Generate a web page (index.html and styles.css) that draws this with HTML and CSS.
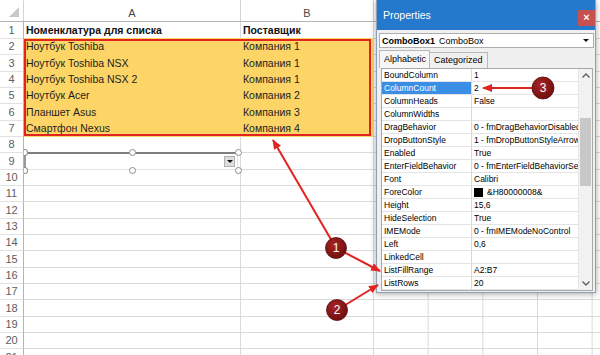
FILE: index.html
```html
<!DOCTYPE html>
<html>
<head>
<meta charset="utf-8">
<link rel="stylesheet" href="styles.css">
</head>
<body>
<div class="screen">
  <div class="sheet">
    <div class="colhdr">
      <div class="corner"><span class="tri"></span></div>
      <div class="ch">A</div>
      <div class="ch">B</div>
      <div class="ch rest"></div>
    </div>
    <div class="row"><div class="rh">1</div><div class="c bold">Номенклатура для списка</div><div class="c bold">Поставщик</div><div class="c rest"></div></div>
    <div class="row"><div class="rh">2</div><div class="c hl">Ноутбук Toshiba</div><div class="c hl">Компания 1</div><div class="c rest"></div></div>
    <div class="row"><div class="rh">3</div><div class="c hl">Ноутбук Toshiba NSX</div><div class="c hl">Компания 1</div><div class="c rest"></div></div>
    <div class="row"><div class="rh">4</div><div class="c hl">Ноутбук Toshiba NSX 2</div><div class="c hl">Компания 1</div><div class="c rest"></div></div>
    <div class="row"><div class="rh">5</div><div class="c hl">Ноутбук Acer</div><div class="c hl">Компания 2</div><div class="c rest"></div></div>
    <div class="row"><div class="rh">6</div><div class="c hl">Планшет Asus</div><div class="c hl">Компания 3</div><div class="c rest"></div></div>
    <div class="row"><div class="rh">7</div><div class="c hl">Смартфон Nexus</div><div class="c hl">Компания 4</div><div class="c rest"></div></div>
    <div class="row"><div class="rh">8</div><div class="c"></div><div class="c"></div><div class="c rest"></div></div>
    <div class="row"><div class="rh">9</div><div class="c"></div><div class="c"></div><div class="c rest"></div></div>
    <div class="row"><div class="rh">10</div><div class="c"></div><div class="c"></div><div class="c rest"></div></div>
    <div class="row"><div class="rh">11</div><div class="c"></div><div class="c"></div><div class="c rest"></div></div>
    <div class="row"><div class="rh">12</div><div class="c"></div><div class="c"></div><div class="c rest"></div></div>
    <div class="row"><div class="rh">13</div><div class="c"></div><div class="c"></div><div class="c rest"></div></div>
    <div class="row"><div class="rh">14</div><div class="c"></div><div class="c"></div><div class="c rest"></div></div>
    <div class="row"><div class="rh">15</div><div class="c"></div><div class="c"></div><div class="c rest"></div></div>
    <div class="row"><div class="rh">16</div><div class="c"></div><div class="c"></div><div class="c rest"></div></div>
    <div class="row"><div class="rh">17</div><div class="c"></div><div class="c"></div><div class="c rest"></div></div>
    <div class="row"><div class="rh">18</div><div class="c"></div><div class="c"></div><div class="c rest"></div></div>
    <div class="row"><div class="rh">19</div><div class="c"></div><div class="c"></div><div class="c rest"></div></div>
    <div class="row"><div class="rh">20</div><div class="c"></div><div class="c"></div><div class="c rest"></div></div>
    <div class="row"><div class="rh">21</div><div class="c"></div><div class="c"></div><div class="c rest"></div></div>

    <div class="selbox"></div>

    <div class="xcombo"><span class="xbtn"><span class="xarrow"></span></span></div>
    <span class="hd l t1"></span><span class="hd m t1"></span><span class="hd r t1"></span>
    <span class="hd l t2"></span><span class="hd m t2"></span><span class="hd r t2"></span>
  </div>

  <div class="props">
    <div class="ptitle"><span class="ptext">Properties</span><span class="pclose">×</span></div>
    <div class="pobj"><b>ComboBox1</b><span class="ptype">ComboBox</span><span class="pdrop"></span></div>
    <div class="ptabs"><span class="tab on">Alphabetic</span><span class="tab">Categorized</span></div>
    <div class="plist">
      <div class="prows">
        <div class="prow"><span class="pn">BoundColumn</span><span class="pv">1</span></div>
        <div class="prow sel"><span class="pn">ColumnCount</span><span class="pv">2</span></div>
        <div class="prow"><span class="pn">ColumnHeads</span><span class="pv">False</span></div>
        <div class="prow"><span class="pn">ColumnWidths</span><span class="pv"></span></div>
        <div class="prow"><span class="pn">DragBehavior</span><span class="pv">0 - fmDragBehaviorDisabled</span></div>
        <div class="prow"><span class="pn">DropButtonStyle</span><span class="pv">1 - fmDropButtonStyleArrow</span></div>
        <div class="prow"><span class="pn">Enabled</span><span class="pv">True</span></div>
        <div class="prow"><span class="pn">EnterFieldBehavior</span><span class="pv">0 - fmEnterFieldBehaviorSelectAll</span></div>
        <div class="prow"><span class="pn">Font</span><span class="pv">Calibri</span></div>
        <div class="prow"><span class="pn">ForeColor</span><span class="pv"><span class="swatch"></span>&amp;H80000008&amp;</span></div>
        <div class="prow"><span class="pn">Height</span><span class="pv">15,6</span></div>
        <div class="prow"><span class="pn">HideSelection</span><span class="pv">True</span></div>
        <div class="prow"><span class="pn">IMEMode</span><span class="pv">0 - fmIMEModeNoControl</span></div>
        <div class="prow"><span class="pn">Left</span><span class="pv">0,6</span></div>
        <div class="prow"><span class="pn">LinkedCell</span><span class="pv"></span></div>
        <div class="prow"><span class="pn">ListFillRange</span><span class="pv">A2:B7</span></div>
        <div class="prow"><span class="pn">ListRows</span><span class="pv">20</span></div>
      </div>
      <div class="pscroll">
        <svg class="chev" width="14" height="14" viewBox="0 0 14 14"><polyline points="3.5,8.5 7,5 10.5,8.5" fill="none" stroke="#606060" stroke-width="1.4"/></svg>
        <span class="thumb"></span>
        <svg class="chev" width="14" height="14" viewBox="0 0 14 14"><polyline points="3.5,5.5 7,9 10.5,5.5" fill="none" stroke="#606060" stroke-width="1.4"/></svg>
      </div>
    </div>
  </div>

  <svg class="annot" width="600" height="355" viewBox="0 0 600 355">
    <defs>
      <marker id="ah" markerWidth="10" markerHeight="8" refX="9" refY="4" orient="auto" markerUnits="userSpaceOnUse">
        <path d="M0,0 L10,4 L0,8 Z" fill="#e2231f"/>
      </marker>
      <radialGradient id="bg" cx="40%" cy="35%" r="70%">
        <stop offset="0" stop-color="#a82424"/>
        <stop offset="1" stop-color="#6b0e0e"/>
      </radialGradient>
    </defs>
    <g stroke="#e2231f" stroke-width="2" fill="none" marker-end="url(#ah)">
      <line x1="336" y1="248" x2="273" y2="140"/>
      <line x1="336" y1="248" x2="380" y2="271"/>
      <line x1="337" y1="310" x2="378" y2="285"/>
      <line x1="543" y1="88" x2="483" y2="88"/>
    </g>
    <g class="badge">
      <circle cx="336" cy="248" r="10.5" fill="url(#bg)" stroke="#5a0b0b" stroke-width="0.8"/>
      <text x="336" y="252">1</text>
      <circle cx="337" cy="310" r="10.5" fill="url(#bg)" stroke="#5a0b0b" stroke-width="0.8"/>
      <text x="337" y="314">2</text>
      <circle cx="543" cy="88" r="11" fill="url(#bg)" stroke="#5a0b0b" stroke-width="0.8"/>
      <text x="543" y="92">3</text>
    </g>
  </svg>
</div>
</body>
</html>
```

FILE: styles.css
```css
* { box-sizing: border-box; }
html, body { margin: 0; padding: 0; }
body {
  width: 600px;
  height: 355px;
  overflow: hidden;
  background: #fff;
  font-family: "Liberation Sans", Arial, sans-serif;
}
.screen {
  position: relative;
  width: 600px;
  height: 355px;
  overflow: hidden;
}

/* ---------- spreadsheet ---------- */
.sheet {
  font-size: 10.5px;
  color: #1d1d1d;
}
.colhdr, .row {
  display: grid;
  grid-template-columns: 24px 217px 133px 1fr;
}
.colhdr {
  height: 22px;
  border-bottom: 1px solid #b4b4b4;
  background: #fff;
}
.corner {
  display: flex;
  justify-content: flex-end;
  align-items: flex-end;
  padding: 0 4px 4px 0;
  border-right: 1px solid #d4d4d4;
}
.tri {
  width: 0;
  height: 0;
  border-left: 10px solid transparent;
  border-bottom: 10px solid #c8c8c8;
}
.ch {
  display: flex;
  justify-content: center;
  align-items: flex-end;
  padding-bottom: 2px;
  font-size: 11px;
  color: #444;
  border-right: 1px solid #d4d4d4;
}
.row { height: 16.33px; }
.rh {
  border-right: 1px solid #b4b4b4;
  border-bottom: 1px solid #e1e1e1;
  color: #5e5e5e;
  font-size: 11px;
  text-align: center;
  line-height: 16px;
}
.c {
  border-right: 1px solid #dadada;
  border-bottom: 1px solid #dadada;
  padding-left: 2px;
  line-height: 16px;
  white-space: nowrap;
  overflow: hidden;
}
.bold { font-weight: bold; color: #111; }
.hl {
  background: #fdd567;
  border-color: #fdd567;
}
.rest {
  border-right: none;
  background: linear-gradient(to left, #dadada 1px, transparent 1px) 0 0 / 54.67px 100% repeat-x;
}
.selbox {
  position: absolute;
  left: 24px;
  top: 39px;
  width: 347px;
  height: 97px;
  border: 2px solid #e2231f;
}
.xcombo {
  position: absolute;
  left: 24px;
  top: 152px;
  width: 214px;
  height: 18px;
  background: #fff;
  border-top: 2px solid #7f7f7f;
  border-left: 2px solid #9a9a9a;
  border-right: 1px solid #e3e3e3;
  border-bottom: 1px solid #e3e3e3;
  display: flex;
  justify-content: flex-end;
  align-items: center;
  padding-right: 2px;
}
.xbtn {
  width: 11px;
  height: 11px;
  background: #dedede;
  border: 1px solid #b0b0b0;
  display: flex;
  justify-content: center;
  align-items: center;
}
.xarrow {
  width: 0;
  height: 0;
  border-left: 3px solid transparent;
  border-right: 3px solid transparent;
  border-top: 3px solid #111;
}
.hd {
  position: absolute;
  width: 7px;
  height: 7px;
  border-radius: 50%;
  border: 1px solid #8c8c8c;
  background: #fff;
}
.hd.l { left: 24px; width: 4px; border-left: none; border-radius: 0 4px 4px 0; }
.hd.m { left: 129px; }
.hd.r { left: 235px; }
.hd.t1 { top: 149px; }
.hd.t2 { top: 167px; }

/* ---------- properties window ---------- */
.props {
  position: absolute;
  left: 376px;
  top: 0;
  width: 220px;
  height: 293px;
  background: #f0f0f0;
  border: 1px solid #8aa0bb;
  border-top: none;
  box-shadow: 0 1px 6px rgba(0, 0, 0, 0.35);
  display: flex;
  flex-direction: column;
  font-size: 8.5px;
  color: #000;
}
.ptitle {
  height: 30px;
  background: #2479cc;
  display: flex;
  align-items: flex-start;
  padding-left: 6px;
  flex: none;
}
.ptext {
  color: #fff;
  font-size: 10.5px;
  margin-top: 9px;
}
.pclose {
  margin-left: auto;
  margin-top: 10px;
  margin-right: 0;
  width: 17px;
  height: 16px;
  background: #c75050;
  color: #fff;
  font-size: 11px;
  font-weight: bold;
  line-height: 15px;
  text-align: center;
}
.pobj {
  margin: 3px 1px 0 2px;
  height: 15px;
  background: #fff;
  border: 1px solid #adadad;
  display: flex;
  align-items: center;
  padding-left: 2px;
  font-size: 9px;
  flex: none;
}
.pobj b { font-weight: bold; }
.ptype { margin-left: 4px; }
.pdrop {
  margin-left: auto;
  margin-right: 4px;
  width: 0;
  height: 0;
  border-left: 3px solid transparent;
  border-right: 3px solid transparent;
  border-top: 3px solid #111;
}
.ptabs {
  display: flex;
  align-items: flex-end;
  height: 19px;
  margin: 1px 0 0 2px;
  flex: none;
}
.tab {
  height: 16px;
  padding: 0 4px;
  border: 1px solid #b8b8b8;
  border-bottom: none;
  font-size: 9px;
  line-height: 15px;
  background: #f0f0f0;
}
.tab.on {
  height: 18px;
  line-height: 17px;
  width: 51px;
  background: #f7f7f7;
  padding-left: 4px;
}
.tab:not(.on) { border-left: none; }
.plist {
  margin: 0 2px 0 4px;
  height: 223px;
  background: #fff;
  border: 1px solid #a8a8a8;
  display: flex;
  flex: none;
}
.prows { flex: 1; min-width: 0; }
.prow {
  display: grid;
  grid-template-columns: 90px 1fr;
  height: 13px;
}
.pn, .pv {
  border-bottom: 1px solid #e4e4e4;
  line-height: 12px;
  white-space: nowrap;
  overflow: hidden;
  padding-left: 2px;
}
.pn { border-right: 1px solid #d8d8d8; }
.pv { display: flex; align-items: center; }
.prow.sel .pn { background: #3a8ee6; color: #fff; }
.swatch {
  width: 9px;
  height: 9px;
  background: #000;
  margin-right: 4px;
  flex: none;
}
.pscroll {
  width: 14px;
  background: #f2f2f2;
  border-left: 1px solid #e6e6e6;
  display: flex;
  flex-direction: column;
  align-items: center;
  flex: none;
}
.chev { display: block; flex: none; }
.thumb {
  width: 11px;
  height: 68px;
  margin-top: 35px;
  margin-bottom: auto;
  background: #c8c8c8;
}

/* ---------- annotations ---------- */
.annot {
  position: absolute;
  left: 0;
  top: 0;
  pointer-events: none;
}
.badge text {
  fill: #fff;
  font-family: "Liberation Sans", Arial, sans-serif;
  font-size: 12px;
  text-anchor: middle;
}
```
